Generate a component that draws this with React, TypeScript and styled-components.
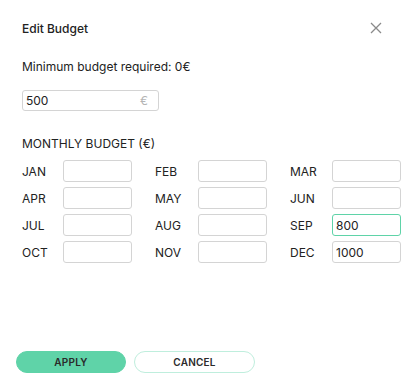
import React from "react";
import styled, { createGlobalStyle } from "styled-components";

const GlobalStyle = createGlobalStyle`
  html, body {
    margin: 0;
    padding: 0;
    background: #ffffff;
  }
  body {
    font-family: Inter, "Noto Sans", sans-serif;
    color: #222222;
  }
`;

const Modal = styled.div`
  width: 410px;
  height: 389px;
  box-sizing: border-box;
  padding: 19px 22px 16px 22px;
  display: flex;
  flex-direction: column;
  background: #fff;
`;

const Header = styled.div`
  display: flex;
  justify-content: space-between;
  align-items: center;
  height: 18px;
`;

const Title = styled.div`
  font-size: 12px;
  font-weight: 500;
  color: #222;
`;

const CloseButton = styled.button`
  border: none;
  background: none;
  padding: 0;
  margin-right: 5px;
  width: 14px;
  height: 14px;
  display: flex;
  cursor: pointer;
`;

const MinText = styled.div`
  margin-top: 22px;
  font-size: 12px;
  color: #222;
`;

const TotalBox = styled.div`
  margin-top: 16px;
  width: 137px;
  height: 21px;
  box-sizing: border-box;
  border: 1px solid #d4d4d4;
  border-radius: 3px;
  display: flex;
  align-items: center;
  justify-content: space-between;
  padding: 0 10px 0 3px;
  font-size: 12px;
`;

const Euro = styled.span`
  color: #b5b5b5;
  font-size: 12px;
`;

const SectionLabel = styled.div`
  margin-top: 25px;
  font-size: 12px;
  color: #222;
`;

const MonthGrid = styled.div`
  margin-top: 9px;
  display: grid;
  grid-template-columns: 41px 69px 23px 43px 69px 23px 42px 69px;
  row-gap: 5px;
  align-items: center;
`;

const MonthLabel = styled.div`
  font-size: 12px;
  font-weight: 400;
  color: #222;
`;

const MonthInput = styled.div<{ $active?: boolean }>`
  height: 22px;
  box-sizing: border-box;
  border: 1px solid ${({ $active }) => ($active ? "#5fd3a8" : "#d4d4d4")};
  border-radius: 3px;
  display: flex;
  align-items: center;
  padding-left: 3px;
  font-size: 12px;
  color: #222;
`;

const Spacer = styled.div`
  flex: 1;
`;

const Footer = styled.div`
  display: flex;
  gap: 8px;
  margin-left: -6px;
`;

const Button = styled.button<{ $primary?: boolean }>`
  height: 22px;
  width: ${({ $primary }) => ($primary ? "110px" : "121px")};
  border-radius: 11px;
  border: 1px solid ${({ $primary }) => ($primary ? "#5fd3a8" : "#bfeedd")};
  background: ${({ $primary }) => ($primary ? "#5fd3a8" : "#ffffff")};
  color: #2a2a2a;
  font-family: Inter, "Noto Sans", sans-serif;
  font-size: 10px;
  font-weight: 600;
  letter-spacing: 0.2px;
  cursor: pointer;
  padding: 0;
`;

const months: { label: string; value?: string; active?: boolean }[] = [
  { label: "JAN" },
  { label: "FEB" },
  { label: "MAR" },
  { label: "APR" },
  { label: "MAY" },
  { label: "JUN" },
  { label: "JUL" },
  { label: "AUG" },
  { label: "SEP", value: "800", active: true },
  { label: "OCT" },
  { label: "NOV" },
  { label: "DEC", value: "1000" },
];

const App: React.FC = () => {
  return (
    <>
      <GlobalStyle />
      <Modal>
        <Header>
          <Title>Edit Budget</Title>
          <CloseButton aria-label="close">
            <svg width="14" height="14" viewBox="0 0 14 14">
              <path d="M2 2 L12 12 M12 2 L2 12" stroke="#8a8a8a" strokeWidth="1.3" />
            </svg>
          </CloseButton>
        </Header>
        <MinText>Minimum budget required: 0€</MinText>
        <TotalBox>
          <span>500</span>
          <Euro>€</Euro>
        </TotalBox>
        <SectionLabel>MONTHLY BUDGET (€)</SectionLabel>
        <MonthGrid>
          {months.map((m, i) => (
            <React.Fragment key={m.label}>
              <MonthLabel>{m.label}</MonthLabel>
              <MonthInput $active={m.active}>{m.value}</MonthInput>
              {i % 3 !== 2 && <div />}
            </React.Fragment>
          ))}
        </MonthGrid>
        <Spacer />
        <Footer>
          <Button $primary>APPLY</Button>
          <Button>CANCEL</Button>
        </Footer>
      </Modal>
    </>
  );
};

export default App;
